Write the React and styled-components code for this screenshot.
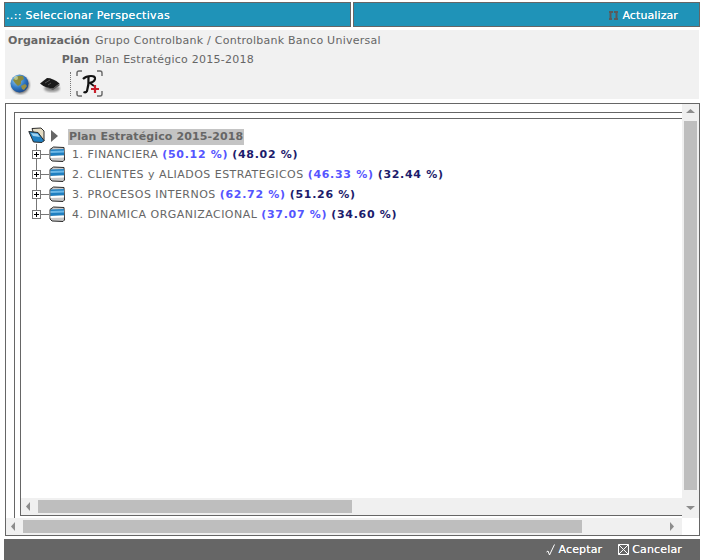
import React from 'react'
import styled, { createGlobalStyle } from 'styled-components'

const GlobalStyle = createGlobalStyle`
	html, body {
		margin: 0;
		padding: 0;
		background: #fff;
	}
	body {
		font-family: "DejaVu Sans", Verdana, sans-serif;
		font-size: 11px;
		color: #666;
	}
`

const Page = styled.div`
	width: 705px;
	height: 560px;
	box-sizing: border-box;
	padding: 2px 5px 1px 4px;
	display: flex;
	flex-direction: column;
	overflow: hidden;
`

const TitleBar = styled.div`
	display: grid;
	grid-template-columns: 1fr 1fr;
	column-gap: 2px;
	height: 25px;
	flex: none;
`

const TitleCell = styled.div`
	background: #1f93b8;
	border: 1px solid #666;
	box-sizing: border-box;
	color: #fff;
	display: flex;
	align-items: center;
	justify-content: ${p => (p.$first ? 'flex-start' : 'flex-end')};
	padding: 1px 21px 0 1px;
	gap: 4px;
`

const TitleText = styled.span`
	letter-spacing: ${p => (p.$wide ? '0.33px' : '0.1px')};
	text-shadow: 0 0 0.6px rgba(255, 255, 255, 0.9);
`

const InfoPanel = styled.div`
	margin: 3px 1px 0 1px;
	height: 69px;
	flex: none;
	box-sizing: border-box;
	background: #f1f1f1;
	padding: 1px 3px 0 3px;
`

const InfoRow = styled.div`
	display: grid;
	grid-template-columns: 81px 1fr;
	column-gap: 6px;
	height: 19px;
	line-height: 19px;
`

const InfoLabel = styled.div`
	text-align: right;
	font-weight: bold;
	color: #666;
	letter-spacing: 0.05px;
`

const InfoValue = styled.div`
	color: #666;
	letter-spacing: 0.25px;
`

const Tools = styled.div`
	display: flex;
	align-items: center;
	height: 27px;
	margin-top: 1px;
	margin-left: 1px;
`

const ToolIcon = styled.svg`
	display: block;
	flex: none;
	margin-right: ${p => p.$gap || 0}px;
`

const ToolSeparator = styled.div`
	width: 0;
	height: 24px;
	border-left: 1px dotted #777;
	margin: 0 5px 0 9px;
`

const OuterFrame = styled.div`
	margin: 4px 0 0 1px;
	flex: none;
	height: 433px;
	box-sizing: border-box;
	border: 1px solid #666;
	display: grid;
	grid-template-columns: 1fr 17px;
	grid-template-rows: 1fr 17px;
`

const Viewport = styled.div`
	overflow: hidden;
	padding: 8px 0 0 8px;
	min-width: 0;
	min-height: 0;
	display: flex;
`

const MiddleFrame = styled.div`
	flex: 1;
	border: solid #666;
	border-width: 1px 0 0 1px;
	padding: 5px 0 0 5px;
	display: flex;
`

const InnerFrame = styled.div`
	flex: 1;
	border: solid #666;
	border-width: 1px 0 1px 1px;
	margin-bottom: 2px;
	display: flex;
	flex-direction: column;
	min-width: 0;
`

const TreeArea = styled.div`
	flex: 1;
	padding: 8px 0 0 7px;
	min-height: 0;
`

const RootRow = styled.div`
	display: flex;
	align-items: center;
	height: 17px;
`

const RootLabel = styled.span`
	background: #c4c4c4;
	color: #666;
	font-weight: bold;
	line-height: 16px;
	padding: 0 1px;
	margin-left: 10px;
	margin-top: 3px;
	letter-spacing: 0.12px;
`

const Row = styled.div`
	display: flex;
	align-items: center;
	height: 20px;
	white-space: nowrap;
`

const RowLabel = styled.span`
	margin-left: 6px;
	color: #666;
	letter-spacing: 0.47px;
`

const Pct = styled.span`
	font-weight: bold;
	color: ${p => (p.$dark ? '#1c1c6c' : '#5555ff')};
	margin-left: 4px;
	letter-spacing: 0.7px;
`

const ScrollTrack = styled.div`
	background: #f0f0f0;
	display: flex;
	flex-direction: ${p => (p.$vertical ? 'column' : 'row')};
	align-items: center;
	flex: none;
	box-sizing: border-box;
`

const ScrollThumb = styled.div`
	background: #bebebe;
	flex: none;
	width: ${p => (p.$vertical ? '13px' : `${p.$size}px`)};
	height: ${p => (p.$vertical ? `${p.$size}px` : '13px')};
`

const ScrollGap = styled.div`
	flex: 1;
`

const ScrollArrow = styled.div`
	flex: none;
	width: 17px;
	height: 17px;
	display: flex;
	align-items: center;
	justify-content: center;
`

const Corner = styled.div`
	background: #fff;
`

const Footer = styled.div`
	margin-top: 3px;
	height: 21px;
	flex: none;
	background: #666;
	color: #fff;
	display: flex;
	align-items: center;
	justify-content: flex-end;
	gap: 16px;
	padding-right: 18px;
`

const FooterButton = styled.span`
	display: inline-flex;
	align-items: center;
	gap: 3px;
	letter-spacing: 0.15px;
	text-shadow: 0 0 0.6px rgba(255, 255, 255, 0.9);
`

const Arrow = ({ dir }) => {
	const points = {
		up: '4.5,1 0,5 9,5',
		down: '0,1 9,1 4.5,5',
		left: '5,0 5,9 1,4.5',
		right: '1,0 1,9 5,4.5'
	}[dir]
	return (
		<svg width="9" height="9" viewBox="0 0 9 9" style={{ display: 'block' }}>
			<polygon points={points} fill="#8c8c8c" />
		</svg>
	)
}

const Globe = () => (
	<ToolIcon width="22" height="22" viewBox="0 0 22 22" $gap={8}>
		<defs>
			<radialGradient id="globe" cx="0.35" cy="0.3" r="0.8">
				<stop offset="0" stopColor="#9fd0f0" />
				<stop offset="0.55" stopColor="#2f78c4" />
				<stop offset="1" stopColor="#173f80" />
			</radialGradient>
			<filter id="soft" x="-30%" y="-30%" width="160%" height="160%">
				<feGaussianBlur stdDeviation="1.2" />
			</filter>
		</defs>
		<circle cx="11.5" cy="12" r="9" fill="#444" opacity="0.7" filter="url(#soft)" />
		<circle cx="10.5" cy="10.5" r="9" fill="url(#globe)" />
		<path d="M4 7 C6 3 11 2 14 3 L15 6 L12 8 L12 11 L9 13 L6 10 Z" fill="#8a8a3c" />
		<path d="M12 13 L16 11 L18 13 L15 17 L13 16 Z" fill="#9a8f45" />
		<circle cx="7" cy="5" r="2" fill="#d8e8b0" opacity="0.6" />
	</ToolIcon>
)

const Book = () => (
	<ToolIcon width="22" height="18" viewBox="0 0 22 18" $gap={0}>
		<ellipse cx="13" cy="13.5" rx="8" ry="3.5" fill="#666" opacity="0.7" filter="url(#soft)" />
		<path d="M1 8.5 L8 3 Q14 3 20.5 8.5 L14 13.5 Q6 13 1 8.5 Z" fill="#1a1a1a" />
		<path d="M6 12 L14 15 L20.5 10.5 L20.5 8.5 L14 13.5 Z" fill="#5a5a5a" />
		<path d="M6 8 L11 5 M9 10 L12 8" stroke="#666" strokeWidth="0.8" />
	</ToolIcon>
)

const PlanAdd = () => (
	<ToolIcon width="27" height="27" viewBox="0 0 27 27">
		<path d="M1 6 V3 Q1 1 3 1 H6 M21 1 H24 Q26 1 26 3 V6 M26 21 V24 Q26 26 24 26 H21 M6 26 H3 Q1 26 1 24 V21" fill="none" stroke="#666" strokeWidth="1.4" />
		<path d="M7 9 Q10 6 15 6 Q19.5 6 19 9 Q18 12.5 13 13" fill="none" stroke="#111" strokeWidth="2.2" />
		<path d="M12.5 7 Q13 15 11 21 Q10 23 7.5 22" fill="none" stroke="#111" strokeWidth="2.2" />
		<path d="M14 13 L18 16" stroke="#111" strokeWidth="1.8" />
		<path d="M19 15 V23 M15 19 H23" stroke="#c8202c" strokeWidth="2.2" />
	</ToolIcon>
)

const Folder = ({ open }) => (
	<svg width="17" height="17" viewBox="0 0 17 17" style={{ display: 'block', flex: 'none' }}>
		{open ? (
			<>
				<path d="M4 1.5 L13 1 L16 4 L16 14 L8 14 Z" fill="#e4dcc4" stroke="#2c2c2c" />
				<path d="M0.8 4.5 L10 5.5 L16 13.5 L14 15.5 L5.5 15 Z" fill="#1f7fc0" stroke="#2c2c2c" />
				<path d="M3 6 L9.5 6.8 L12 10 L5 9 Z" fill="#9fd2f0" />
			</>
		) : (
			<>
				<path d="M1 3.5 L4.5 1 L15 1.5 L15.5 14 L14 15.5 L3 15 L1 13 Z" fill="#c8c8c8" stroke="#2c2c2c" />
				<path d="M1.5 3.5 L15 3 L15 9.5 L1.5 10 Z" fill="#1f7fc0" />
				<path d="M1.5 5 L15 4.5 L15 6.5 L1.5 7 Z" fill="#6fb8e6" />
				<path d="M1.5 10 L15 9.5 L15 11.5 L1.5 12 Z" fill="#fff" />
			</>
		)}
	</svg>
)

const Expander = ({ last }) => (
	<svg width="17" height="20" viewBox="0 0 17 20" style={{ display: 'block', flex: 'none', marginLeft: 4 }}>
		<path d={last ? 'M4.5 0 V6' : 'M4.5 0 V6 M4.5 15 V20'} stroke="#777" fill="none" />
		<path d="M9 10.5 H17" stroke="#777" fill="none" />
		<rect x="0.5" y="6.5" width="8" height="8" fill="#fff" stroke="#777" />
		<path d="M2 10.5 H7 M4.5 8 V13" stroke="#000" fill="none" />
	</svg>
)

const perspectives = [
	{ name: '1. FINANCIERA', a: '(50.12 %)', b: '(48.02 %)' },
	{ name: '2. CLIENTES y ALIADOS ESTRATEGICOS', a: '(46.33 %)', b: '(32.44 %)' },
	{ name: '3. PROCESOS INTERNOS', a: '(62.72 %)', b: '(51.26 %)' },
	{ name: '4. DINAMICA ORGANIZACIONAL', a: '(37.07 %)', b: '(34.60 %)' }
]

const App = () => (
	<Page>
		<GlobalStyle />
		<TitleBar>
			<TitleCell $first>
				<TitleText $wide>..:: Seleccionar Perspectivas</TitleText>
			</TitleCell>
			<TitleCell>
				<svg width="9" height="11" viewBox="0 0 9 11">
					<path d="M1.5 1 V10 M7.5 1 V10 M0 2 H4 M5 9 H9 M0 9 H3 M5 2 H9" stroke="#5a5a5a" strokeWidth="2" fill="none" />
				</svg>
				<TitleText>Actualizar</TitleText>
			</TitleCell>
		</TitleBar>

		<InfoPanel>
			<InfoRow>
				<InfoLabel>Organización</InfoLabel>
				<InfoValue>Grupo Controlbank / Controlbank Banco Universal</InfoValue>
			</InfoRow>
			<InfoRow>
				<InfoLabel>Plan</InfoLabel>
				<InfoValue>Plan Estratégico 2015-2018</InfoValue>
			</InfoRow>
			<Tools>
				<Globe />
				<Book />
				<ToolSeparator />
				<PlanAdd />
			</Tools>
		</InfoPanel>

		<OuterFrame>
			<Viewport>
				<MiddleFrame>
					<InnerFrame>
						<TreeArea>
							<RootRow>
								<Folder open />
								<svg width="7" height="12" viewBox="0 0 7 12" style={{ marginLeft: 6 }}>
									<polygon points="0,0 7,6 0,12" fill="#666" />
								</svg>
								<RootLabel>Plan Estratégico 2015-2018</RootLabel>
							</RootRow>
							{perspectives.map((p, i) => (
								<Row key={p.name}>
									<Expander last={i === perspectives.length - 1} />
									<Folder />
									<RowLabel>{p.name}</RowLabel>
									<Pct>{p.a}</Pct>
									<Pct $dark>{p.b}</Pct>
								</Row>
							))}
						</TreeArea>
						<ScrollTrack>
							<ScrollArrow><Arrow dir="left" /></ScrollArrow>
							<ScrollThumb $size={314} />
						</ScrollTrack>
					</InnerFrame>
				</MiddleFrame>
			</Viewport>
			<ScrollTrack $vertical>
				<ScrollArrow><Arrow dir="up" /></ScrollArrow>
				<ScrollThumb $vertical $size={369} />
				<ScrollGap />
				<ScrollArrow><Arrow dir="down" /></ScrollArrow>
			</ScrollTrack>
			<ScrollTrack>
				<ScrollArrow><Arrow dir="left" /></ScrollArrow>
				<ScrollThumb $size={559} />
				<ScrollGap />
				<ScrollArrow><Arrow dir="right" /></ScrollArrow>
			</ScrollTrack>
			<Corner />
		</OuterFrame>

		<Footer>
			<FooterButton>
				<svg width="10" height="12" viewBox="0 0 10 12">
					<path d="M0.5 8 L2 7 L3.5 11 L8.5 0.5" stroke="#fff" fill="none" />
				</svg>
				Aceptar
			</FooterButton>
			<FooterButton>
				<svg width="11" height="11" viewBox="0 0 11 11">
					<path d="M0.5 0.5 H10.5 V10.5 H0.5 Z M0.5 0.5 L10.5 10.5 M10.5 0.5 L0.5 10.5" stroke="#fff" fill="none" />
				</svg>
				Cancelar
			</FooterButton>
		</Footer>
	</Page>
)

export default App
